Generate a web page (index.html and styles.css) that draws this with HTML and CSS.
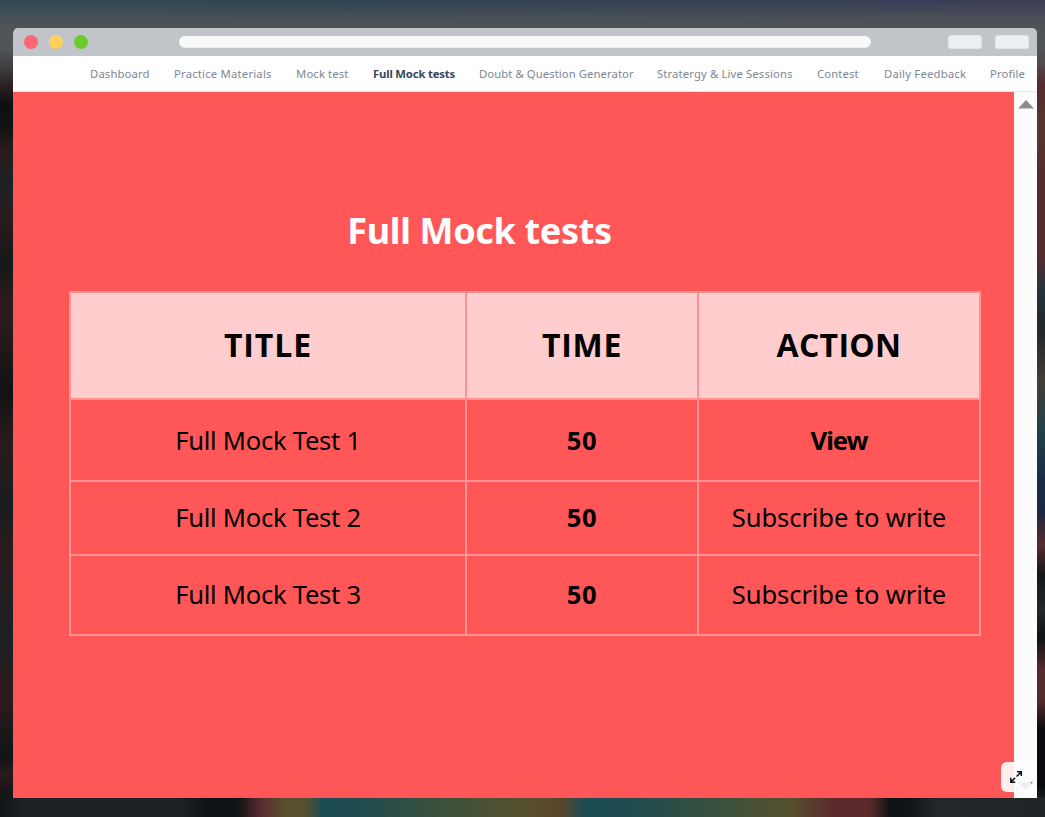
FILE: index.html
```html
<!DOCTYPE html>
<html lang="en">
<head>
<meta charset="utf-8">
<title>Full Mock tests</title>
<link rel="stylesheet" href="styles.css">
</head>
<body>
<div class="window">
  <header class="titlebar">
    <div class="lights"><i class="light red"></i><i class="light yellow"></i><i class="light green"></i></div>
    <div class="address"></div>
    <div class="buttons"><i></i><i></i></div>
  </header>
  <nav class="nav">
    <a class="n1">Dashboard</a>
    <a class="n2">Practice Materials</a>
    <a class="n3">Mock test</a>
    <a class="n4 active">Full Mock tests</a>
    <a class="n5">Doubt &amp; Question Generator</a>
    <a class="n6">Stratergy &amp; Live Sessions</a>
    <a class="n7">Contest</a>
    <a class="n8">Daily Feedback</a>
    <a class="n9">Profile</a>
  </nav>
  <div class="body">
    <main class="content">
      <h1><span>Full Mock tests</span></h1>
      <div class="table">
        <div class="cell head c-title">TITLE</div><div class="cell head c-time">TIME</div><div class="cell head c-action">ACTION</div>
        <div class="cell name">Full Mock Test 1</div><div class="cell bold">50</div><div class="cell bold view">View</div>
        <div class="cell name low">Full Mock Test 2</div><div class="cell bold low">50</div><div class="cell sub low">Subscribe to write</div>
        <div class="cell name low">Full Mock Test 3</div><div class="cell bold low">50</div><div class="cell sub low">Subscribe to write</div>
      </div>
    </main>
    <aside class="scroll"><svg width="16" height="9" viewBox="0 0 16 9"><path d="M0 8.5 8 0l8 8.5z" fill="#8b8b8b"/></svg></aside>
    <div class="expand">
      <svg width="36" height="30" viewBox="0 0 36 30">
        <g fill="none" stroke="#0d1216" stroke-width="1.5">
          <path d="M16 9.8h4.3v4.3M20.3 9.8l-4.7 4.7M9.800 15.800v4.400h4.400M9.800 20.200l4.300-4.300"/>
        </g>
        <path d="M16.500 20h16l-8 8z" fill="#f0f0f0"/>
        <path d="M29.500 20h2.500l-1.800 1.800z" fill="#777"/>
      </svg>
    </div>
  </div>
</div>
</body>
</html>
```
FILE: styles.css
```css
* { box-sizing: border-box; }
body {
  margin: 0;
  width: 1045px;
  height: 817px;
  overflow: hidden;
  padding: 28px 8px 19px 13px;
  font-family: "Noto Sans", "Open Sans", sans-serif;
  background:
    linear-gradient(90deg, #111416 0, #1e2224 25px, #1e2224 180px, #101315 205px, #101315 238px, #5b2d30 262px, #58502e 285px, #58502e 305px, #1c4c53 322px, #1f4b4f 355px, #37503f 430px, #57502c 525px, #57452a 562px, #1c4c53 585px, #1f4b4f 630px, #37503f 710px, #55502d 790px, #5b292c 835px, #5b292c 870px, #101315 890px, #101315 910px, #23272a 935px, #202427 1045px) 0 100% / 100% 20px no-repeat,
    linear-gradient(rgba(80,84,87,0), rgba(80,84,87,.8) 18px, #505457 30px) 0 0 / 100% 30px no-repeat,
    linear-gradient(90deg, #2c4753, #304354 400px, #3a3d58) 0 0 / 100% 30px no-repeat,
    linear-gradient(#505457 50px, #3c3a3d 70px, #2c2022 85px, #0e1012 105px, #101214 125px, #2b1b1e 150px, #1d2224 182px, #2b1b1e 222px, #141719 265px, #2b1b1e 300px, #2b1b1e 325px, #101214 390px, #2b1b1e 445px, #191d20 505px, #2b1b1e 545px, #1c2124 635px, #2b1b1e 685px, #2b1b1e 705px, #111416 755px, #2b1b1e 775px, #101315 800px) 0 0 / 13px 100% no-repeat,
    linear-gradient(#505457 45px, #52494c 65px, #562b2e 85px, #57372d 125px, #562b2e 175px, #562b2e 255px, #25343d 290px, #22272a 330px, #433d36 380px, #22414a 430px, #182d45 480px, #1b2742 510px, #562b2e 545px, #141719 575px, #22272a 610px, #101315 638px, #562b2e 670px, #562b2e 700px, #090b0e 730px, #090b0e 785px, #202427 805px) 100% 0 / 9px 100% no-repeat,
    #151719;
}
.window { height: 770px; display: flex; flex-direction: column; border-radius: 5px 5px 0 0; overflow: hidden; }
.titlebar { height: 28px; flex: none; background: #c1c4c9; display: flex; align-items: center; padding: 0 8px 0 11px; }
.lights { display: flex; gap: 11px; width: 155px; }
.light { width: 14px; height: 14px; border-radius: 50%; }
.red { background: #ff6674; }
.yellow { background: #ffd15c; }
.green { background: #6bcb2c; }
.address { width: 692px; height: 12px; border-radius: 6px; background: #f8faf9; border-bottom: 1px solid #e8ebeb; }
.buttons { display: flex; gap: 13px; margin-left: auto; }
.buttons i { width: 34px; height: 14px; border-radius: 3px; background: #ebeff3; border: 1px solid #e2e6e9; }
.nav { height: 36px; flex: none; background: #fff; border-bottom: 1px solid #e7e9ec; display: flex; align-items: center; justify-content: flex-end; gap: 24px; padding-right: 11px; color: #7c8794; font-size: 11.3px; }
.nav a { white-space: nowrap; flex: none; letter-spacing: .13px; }
.nav .n2 { letter-spacing: .2px; }
.nav .n5 { letter-spacing: .07px; }
.nav .n8 { letter-spacing: .2px; }
.n1 { width: 60px; } .n2 { width: 98px; } .n3 { width: 53px; } .n4 { width: 82px; } .n5 { width: 154px; } .n6 { width: 136px; } .n7 { width: 43px; } .n8 { width: 82px; } .n9 { width: 36px; }
.nav .active { color: #33475b; font-weight: 700; letter-spacing: -.17px; }
.body { flex: 1; display: flex; position: relative; }
.content { width: 1001px; background: #ff5757; padding: 114px 0 0 56px; }
h1 { margin: 0; width: 821px; height: 50px; line-height: 50px; text-align: center; color: #fff; font-size: 36px; letter-spacing: -.35px; white-space: nowrap; }
.table { width: 912px; height: 345px; margin-top: 35px; display: grid; grid-template-columns: 394px 230px 280px; grid-template-rows: 105px 80px 72px 78px; gap: 2px; padding: 2px; background: #ff9292; }
.cell { background: #ff5757; color: #000; display: flex; align-items: center; justify-content: center; font-size: 25.6px; white-space: nowrap; }
.head { background: #ffcdcd; font: 700 32px "Open Sans", sans-serif; padding-bottom: 3px; }
.c-title { letter-spacing: .9px; }
.c-time { letter-spacing: .7px; }
.c-action { letter-spacing: .3px; }
.name { letter-spacing: -.27px; }
.sub { letter-spacing: -.12px; }
.bold { font-weight: 700; letter-spacing: .5px; }
.view { letter-spacing: -1px; }
.low { padding-bottom: 2px; }
.scroll { width: 23px; background: #fcfcfc; display: flex; justify-content: center; padding-top: 8px; }
.expand { position: absolute; left: 988px; bottom: 6px; width: 36px; height: 30px; border-radius: 6px 0 0 6px; background: linear-gradient(90deg, #ffeeee 13px, #fdfdfd 13px); }
.expand svg { display: block; }
```
